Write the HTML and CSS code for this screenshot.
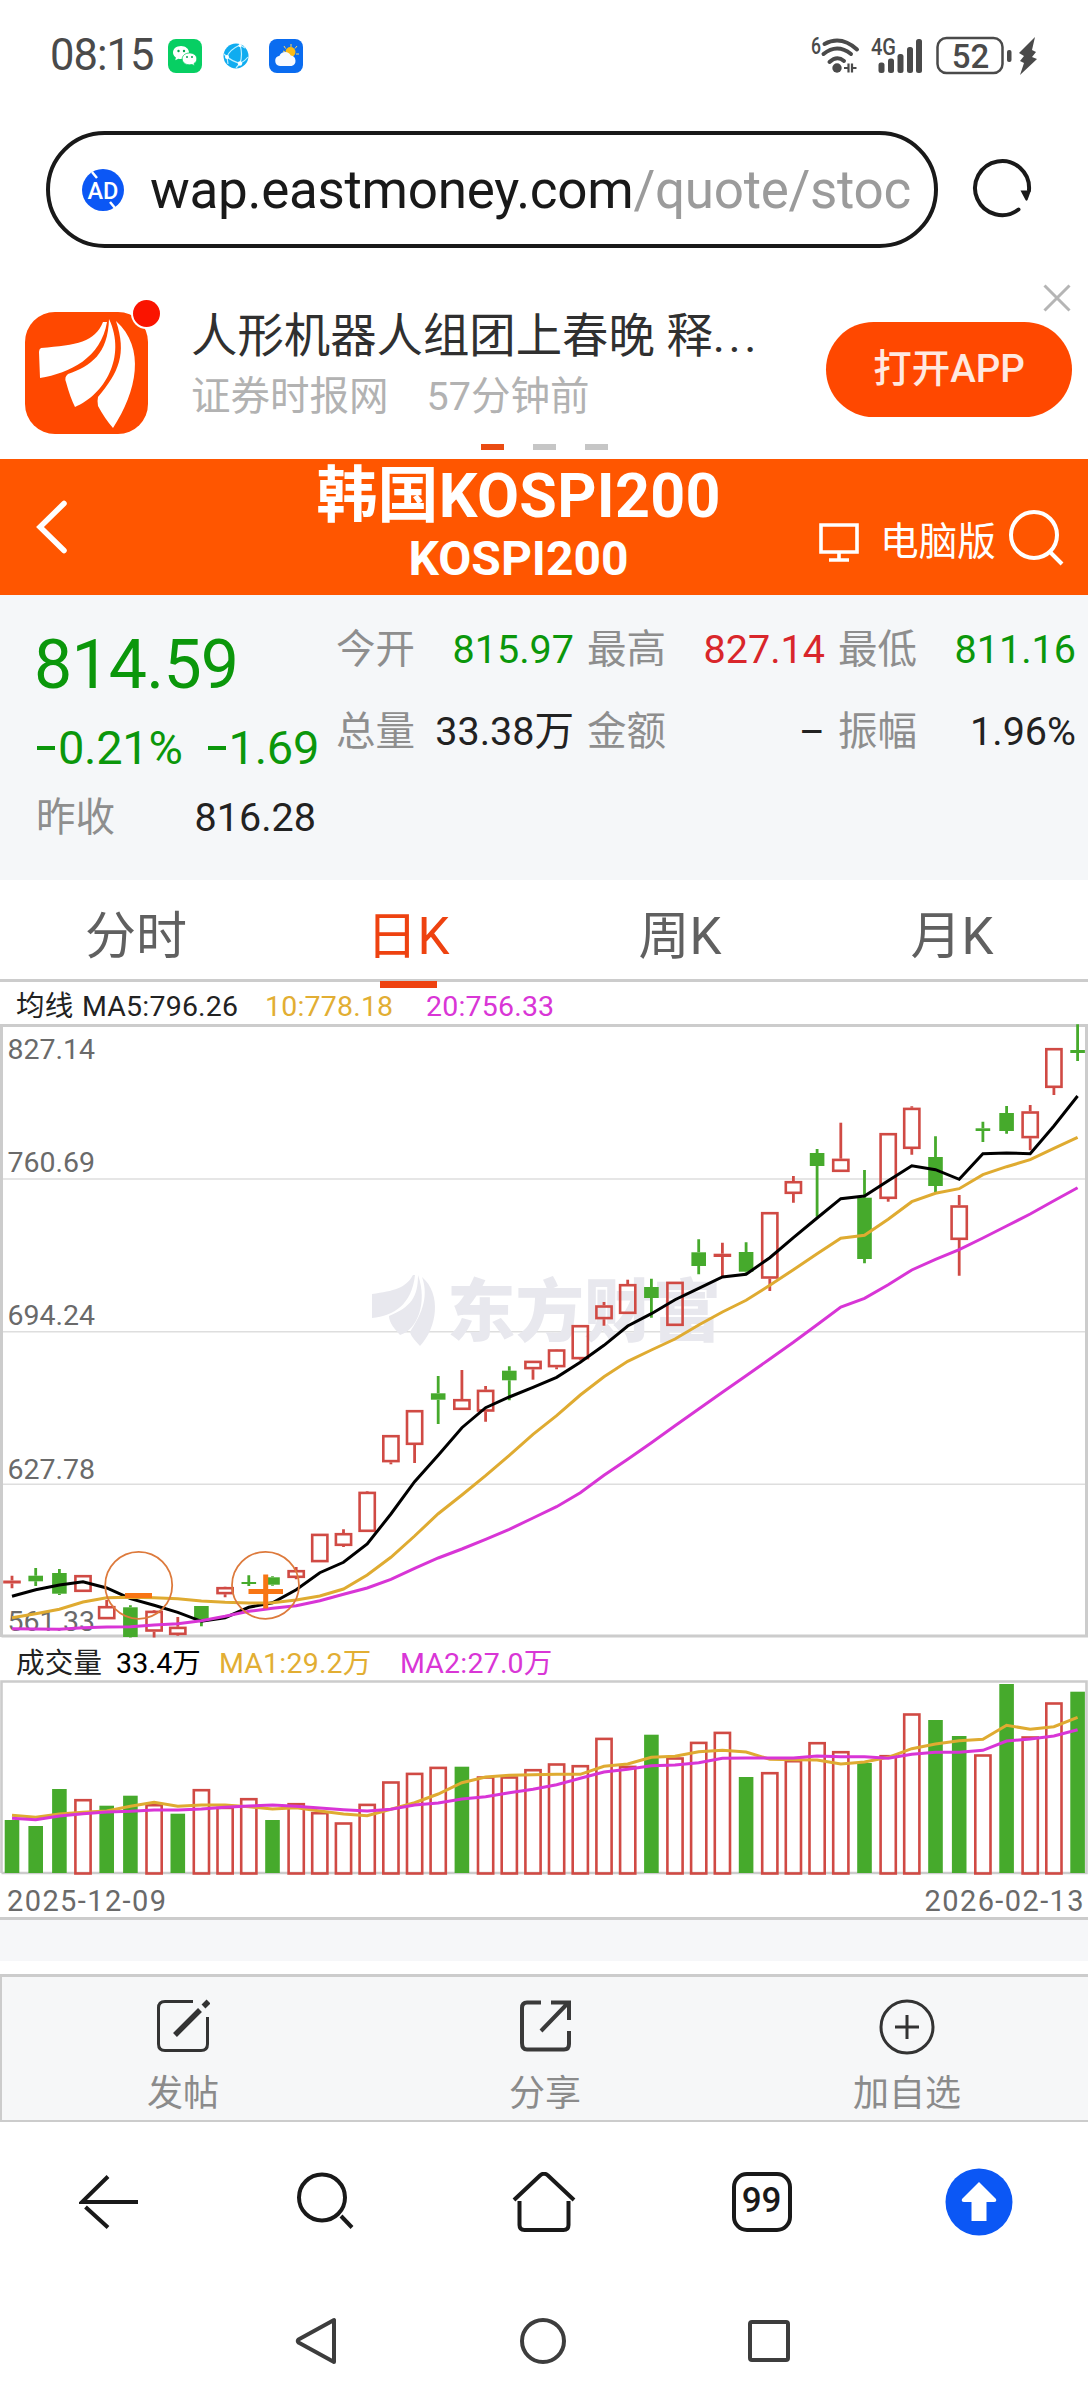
FILE: index.html
```html
<!DOCTYPE html>
<html lang="zh-CN">
<head>
  <meta charset="UTF-8">
  <title>韩国KOSPI200</title>
  <link rel="stylesheet" href="styles.css">
</head>
<body>

  <div class="status-bar">
    <span class="clock">08:15</span>
    <svg class="app-icon" width="34" height="34" viewBox="0 0 34 34">
      <rect width="34" height="34" rx="8" fill="#07cf63"/>
      <path d="M13 7c-4.600 0-8 2.800-8 6.500 0 2 1.100 3.800 2.900 5l-.6 2.700 3-1.500c.9.200 1.800.3 2.700.3 4.500 0 8-2.900 8-6.500S17.500 7 13 7z" fill="#fff"/>
      <path d="M21.500 14c-4.200 0-7.300 2.600-7.300 5.900s3.100 5.900 7.300 5.900c.9 0 1.700-.1 2.500-.3l2.500 1.300-.5-2.300c1.800-1.100 2.800-2.700 2.800-4.600 0-3.300-3.100-5.900-7.300-5.900z" fill="#fff" stroke="#07cf63" stroke-width=".8"/>
      <g fill="#07a550"><circle cx="10.500" cy="12" r="1.200"/><circle cx="16" cy="12" r="1.200"/><circle cx="19" cy="18" r="1"/><circle cx="24" cy="18" r="1"/></g>
    </svg>
    <svg class="globe-icon" width="26" height="26" viewBox="0 0 26 26">
      <circle cx="13" cy="13" r="12.500" fill="#0facf0"/>
      <path d="M17 2Q6 7 4 14Q9 18 17 20.500Q20 11 17 2M4 14L1 11M17 20.500L13 25M17 20.500Q22 18 25 14M17 2L22 5M4 14L5 21" fill="none" stroke="#bff0ff" stroke-width="1.200"/>
      <g fill="#fff"><circle cx="4" cy="14" r="2"/><circle cx="17" cy="20.500" r="2.200"/><circle cx="17" cy="2.500" r="1.500"/></g>
    </svg>
    <svg class="app-icon" width="34" height="34" viewBox="0 0 34 34">
      <rect width="34" height="34" rx="8" fill="#0a6cf0"/>
      <path d="M22 5v3M15 7l1.500 2.500M28 7l-2 2.500M30 15h-3M14 12l2 1" stroke="#ffd75a" stroke-width="1"/>
      <circle cx="21.500" cy="13" r="5" fill="#fdbb14"/>
      <path d="M11 27a5.200 5.200 0 0 1-.5-10.300A6.200 6.200 0 0 1 21.800 16.600 5.300 5.300 0 0 1 22.500 27z" fill="#f7faff"/>
    </svg>
    <svg class="signals" width="228" height="40" viewBox="0 0 228 40">
      <text x="1" y="18" class="net-label" textLength="10" lengthAdjust="spacingAndGlyphs">6</text>
      <g fill="none" stroke="#4a4a4a" stroke-width="4" stroke-linecap="round">
        <path d="M14.500 8Q31 -1 47 13.500"/>
        <path d="M13.500 18Q27 7 41 18"/>
        <path d="M19.500 26Q27 19 34 25"/>
      </g>
      <circle cx="27" cy="32" r="4.700" fill="#4a4a4a"/>
      <path d="M38.500 27.500v9M42 27.500v9M34 32h4.500M42 32h4.500" stroke="#4a4a4a" stroke-width="2.200"/>
      <text x="61" y="19" class="net-label" textLength="25" lengthAdjust="spacingAndGlyphs">4G</text>
      <g fill="#4a4a4a">
        <rect x="68.500" y="26.500" width="6" height="10.500" rx="2.500"/>
        <rect x="78" y="22.500" width="6" height="14.500" rx="2.500"/>
        <rect x="87.500" y="18" width="6" height="19" rx="2.500"/>
        <rect x="97" y="11" width="6" height="26" rx="2.500"/>
        <rect x="106" y="3" width="6" height="34" rx="2.500"/>
      </g>
      <rect x="127.500" y="2" width="65" height="35" rx="9" fill="none" stroke="#4a4a4a" stroke-width="2.500"/>
      <text x="160.500" y="31.500" class="battery-text" text-anchor="middle">52</text>
      <rect x="197" y="14" width="4.500" height="12" rx="2" fill="#4a4a4a"/>
      <path d="M225 1L209 17l5 3-4 5 4 2-4 12 17-16-5-2 4-5-4-2z" fill="#4a4a4a"/>
    </svg>
  </div>

  <div class="address-row">
    <div class="address-bar">
      <svg class="ad-icon" width="42" height="42" viewBox="0 0 42 42">
        <circle cx="21" cy="21" r="21" fill="#0b57f5"/>
        <path d="M10 3l5 6M28 33l5 6" stroke="#fff" stroke-width="2.500"/>
        <text x="21" y="29.500" text-anchor="middle">AD</text>
      </svg>
      <span class="url">wap.eastmoney.com<span class="url-path">/quote/stoc</span></span>
    </div>
    <svg class="reload" width="60" height="62" viewBox="0 0 60 62">
      <path d="M46.500 50.500A27 27 0 1 1 57 31" fill="none" stroke="#191919" stroke-width="4" stroke-linecap="round"/>
      <path d="M48.500 31.500h10.500l-3.500 9.500q-1 1.500-2 0z" fill="#191919"/>
    </svg>
  </div>

  <div class="promo">
    <svg class="promo-logo" width="138" height="138" viewBox="0 0 138 138">
      <rect x="0" y="14" width="123" height="122" rx="30" fill="#ff4800"/>
      <path d="M78 24C70 44 52 47 16 50q-2 1-2 4l1 26C45 75 76 60 82 24z" fill="#fff"/>
      <path d="M84 21C83 56 66 68 43 76q-4 3-2 8 4 15 9 25C79 97 102 59 84 21z" fill="#fff"/>
      <path d="M91 23C102 56 94 74 73 99q-1 4 0 9 7 13 15 22C112 93 121 50 91 23z" fill="#fff"/>
      <circle cx="121.500" cy="15.500" r="15.500" fill="#fff"/>
      <circle cx="121.500" cy="15.500" r="13.500" fill="#fa1400"/>
    </svg>
    <div class="promo-text">
      <div class="promo-title">人形机器人组团上春晚 释<span class="ellipsis">...</span></div>
      <div class="promo-meta"><span>证券时报网</span><span>57分钟前</span></div>
    </div>
    <div class="open-app">打开APP</div>
    <svg class="close" width="28" height="28" viewBox="0 0 28 28"><path d="M1.500 1.500l25 25M26.500 1.500l-25 25" stroke="#b5b5b5" stroke-width="3"/></svg>
    <div class="pager"><i class="on"></i><i></i><i></i></div>
  </div>

  <div class="header">
    <svg class="back" width="32" height="54" viewBox="0 0 32 54"><path d="M28 3.500L4 27l24 23.500" fill="none" stroke="#fff" stroke-width="5.500" stroke-linecap="round"/></svg>
    <div class="header-title">
      <div class="name">韩国KOSPI200</div>
      <div class="code">KOSPI200</div>
    </div>
    <div class="header-tools">
      <svg width="40" height="40" viewBox="0 0 40 40"><path d="M2 3h36v27H2zM20 30v7M10 38h20" fill="none" stroke="#fff" stroke-width="3.600"/></svg>
      <span class="pc">电脑版</span>
      <svg class="find" width="56" height="58" viewBox="0 0 56 58"><circle cx="26" cy="26" r="23" fill="none" stroke="#fff" stroke-width="4"/><path d="M41 42l13 13" stroke="#fff" stroke-width="4"/></svg>
    </div>
  </div>

  <div class="quote">
    <div class="quote-main">
      <div class="price">814.59</div>
      <div class="change"><span class="pct"><i class="minus"></i>0.21%</span><span><i class="minus"></i>1.69</span></div>
      <div class="cell prev"><label>昨收</label><b>816.28</b></div>
    </div>
    <div class="quote-grid">
      <div class="cell"><label>今开</label><b class="green">815.97</b></div>
      <div class="cell"><label>最高</label><b class="red">827.14</b></div>
      <div class="cell"><label>最低</label><b class="green">811.16</b></div>
      <div class="cell"><label>总量</label><b>33.38万</b></div>
      <div class="cell"><label>金额</label><b>–</b></div>
      <div class="cell"><label>振幅</label><b>1.96%</b></div>
    </div>
  </div>

  <div class="tabs">
    <div class="tab">分时</div>
    <div class="tab active">日K</div>
    <div class="tab">周K</div>
    <div class="tab">月K</div>
  </div>

  <div class="legend">
    <span class="l-name">均线</span><span class="l-ma5">MA5:796.26</span><span class="l-ma10 yellow">10:778.18</span><span class="l-ma20 pink">20:756.33</span>
  </div>
  <svg class="kline" id="kline" width="1088" height="614" viewBox="0 0 1088 614"></svg>

  <div class="legend vol-legend">
    <span class="v-name">成交量</span><span class="v-now">33.4万</span><span class="v-ma1 yellow">MA1:29.2万</span><span class="v-ma2 pink">MA2:27.0万</span>
  </div>
  <svg class="volume" id="volume" width="1088" height="196" viewBox="0 0 1088 196"></svg>
  <div class="dates"><span>2025-12-09</span><span>2026-02-13</span></div>
  <div class="gap"></div>

  <div class="actions">
    <div class="action">
      <svg width="54" height="54" viewBox="0 0 54 54" fill="none" stroke="#333" stroke-width="3"><path d="M37 2.500H9Q2.500 2.500 2.500 9v36Q2.500 51.500 9 51.500h36Q51.500 51.500 51.500 45V18"/><path d="M19 36L44 11M47.500 7.500l5-5" stroke-width="5.500"/></svg>
      <span>发帖</span>
    </div>
    <div class="action">
      <svg width="54" height="54" viewBox="0 0 54 54" fill="none" stroke="#3a3a3a" stroke-width="4"><path d="M23 3.500H9Q4 3.500 4 9v35Q4 50.500 9 50.500h37Q51 50.500 51 45V32M33 3.500h18V21M50 4L23 32"/></svg>
      <span>分享</span>
    </div>
    <div class="action">
      <svg width="56" height="56" viewBox="0 0 56 56" fill="none" stroke="#333" stroke-width="3"><circle cx="28" cy="28" r="26"/><path d="M16 28h24M28 16v24"/></svg>
      <span>加自选</span>
    </div>
  </div>

  <div class="browser-nav">
    <div><svg width="60" height="60" viewBox="0 0 60 60" fill="none" stroke="#191919" stroke-width="4"><path d="M59 30H3L29 4.500M6.500 35L29 55.500"/></svg></div>
    <div><svg width="60" height="60" viewBox="0 0 60 60" fill="none" stroke="#191919" stroke-width="4"><circle cx="26" cy="25.500" r="23"/><path d="M45 44l11 11.500"/></svg></div>
    <div><svg width="64" height="60" viewBox="0 0 64 60" fill="none" stroke="#191919" stroke-width="4"><path d="M2 28L28 3.500q4-3.500 8 0L62 28M7.500 29v24q0 5 5 5h39q5 0 5-5V29"/></svg></div>
    <div><span class="tab-count">99</span></div>
    <div><svg width="68" height="68" viewBox="0 0 68 68"><circle cx="34" cy="34" r="33.500" fill="#0b57f5"/><path d="M34 14L17 31q-1 3 2 3h7.500v19h15V34H49q3 0 2-3z" fill="#fff"/></svg></div>
  </div>

  <div class="system-nav">
    <svg width="42" height="50" viewBox="0 0 42 50"><path d="M39 4v42L3.500 26.500q-1.500-1.500 0-3z" fill="none" stroke="#3d3d3d" stroke-width="4" stroke-linejoin="round"/></svg>
    <svg width="46" height="46" viewBox="0 0 46 46"><circle cx="23" cy="23" r="21" fill="none" stroke="#3d3d3d" stroke-width="4"/></svg>
    <svg width="44" height="44" viewBox="0 0 44 44"><rect x="3" y="3" width="38" height="38" rx="2" fill="none" stroke="#3d3d3d" stroke-width="4"/></svg>
  </div>

  <script src="script.js"></script>
</body>
</html>
```
FILE: styles.css
```css
body {
  margin: 0;
  width: 1088px;
  height: 2400px;
  overflow: hidden;
  background: #fff;
  color: #222;
  font-family: Roboto, "Noto Sans CJK SC", sans-serif;
}

div, span {
  white-space: nowrap;
}

svg {
  display: block;
  flex: none;
}

/* phone status bar */
.status-bar {
  display: flex;
  align-items: center;
  box-sizing: border-box;
  height: 131px;
  padding: 0 50px 19px 50px;
}

.clock {
  width: 118px;
  font-size: 43.5px;
  letter-spacing: -1px;
  line-height: 60px;
  color: #4a4a4a;
}

.globe-icon {
  margin: 0 20px 0 21px;
}

.signals {
  margin-left: auto;
  overflow: visible;
}

.net-label {
  font-size: 23px;
  font-weight: 500;
  fill: #4a4a4a;
}

.battery-text {
  font-size: 33px;
  font-weight: 500;
  fill: #4a4a4a;
}

/* address bar */
.address-row {
  display: flex;
  align-items: center;
  height: 117px;
  padding-left: 46px;
}

.address-bar {
  display: flex;
  align-items: center;
  box-sizing: border-box;
  width: 892px;
  height: 117px;
  padding-left: 32px;
  border: 4px solid #191919;
  border-radius: 59px;
}

.ad-icon text {
  font-size: 23.5px;
  font-weight: 500;
  fill: #fff;
}

.url {
  margin-left: 26px;
  font-size: 53px;
  line-height: 80px;
  letter-spacing: -0.3px;
  color: #191919;
}

.url-path {
  color: #9b9b9b;
}

.reload {
  margin-left: 34px;
}

/* app promotion */
.promo {
  position: relative;
  display: flex;
  height: 211px;
}

.promo-logo {
  margin: 50px 0 0 25px;
}

.promo-text {
  flex: 1;
  padding: 56px 0 0 28px;
}

.promo-title {
  font-size: 46.4px;
  line-height: 64px;
  color: #303030;
}

.ellipsis {
  letter-spacing: 3.5px;
}

.promo-meta {
  display: flex;
  gap: 38px;
  font-size: 39.5px;
  line-height: 58px;
  color: #b2b2b2;
}

.open-app {
  width: 246px;
  height: 95px;
  margin: 74px 16px 0 0;
  border-radius: 48px;
  background: #ff4800;
  color: #ffe9e0;
  font-size: 38.5px;
  font-weight: 500;
  line-height: 93px;
  text-align: center;
}

.close {
  position: absolute;
  top: 36px;
  right: 17px;
}

.pager {
  position: absolute;
  left: 481px;
  bottom: 9px;
  display: flex;
  gap: 29px;
}

.pager i {
  width: 23px;
  height: 6px;
  background: #c6c6c6;
}

.pager .on {
  background: #ea4c12;
}

/* orange header */
.header {
  display: flex;
  align-items: center;
  height: 136px;
  background: #ff5600;
  color: #fff;
}

.back {
  margin-left: 36px;
}

.header-title {
  width: 451px;
  margin: -6px 0 0 225px;
  text-align: center;
  font-weight: 700;
}

.name {
  font-size: 61px;
  line-height: 70px;
  letter-spacing: 0.3px;
}

.code {
  font-size: 48px;
  line-height: 56px;
}

.header-tools {
  display: flex;
  align-items: center;
  margin: 30px 0 0 75px;
}

.pc {
  margin: 0 12px 0 21px;
  font-size: 38.7px;
  line-height: 50px;
}

.find {
  margin-top: -8px;
}

/* quote summary */
.quote {
  display: flex;
  height: 285px;
  background: #f5f7f9;
}

.quote-main {
  width: 280px;
  padding: 24px 0 0 36px;
  color: #0b970b;
}

.price {
  margin-left: -2px;
  font-size: 68px;
  line-height: 92px;
  letter-spacing: -0.8px;
}

.change {
  display: flex;
  gap: 24px;
  font-size: 47px;
  line-height: 74px;
  letter-spacing: -0.3px;
}

.minus {
  display: inline-block;
  width: 18px;
  height: 4px;
  margin: 0 3px 14px 1px;
  vertical-align: baseline;
  background: currentColor;
}

.cell {
  display: flex;
  justify-content: space-between;
  font-size: 39.5px;
  line-height: 82px;
  color: #8e8e8e;
}

.prev {
  line-height: 66px;
}

.cell b {
  font-weight: 400;
  color: #222;
}

.cell .green {
  color: #0b970b;
}

.cell .red {
  color: #d9262b;
}

.quote-grid {
  display: grid;
  grid-template-columns: 238px 238px 238px;
  column-gap: 13px;
  align-content: start;
  padding: 14px 0 0 20px;
}

/* period tabs */
.tabs {
  display: grid;
  grid-template-columns: repeat(4, 1fr);
  height: 99px;
  border-bottom: 3px solid #ccc;
}

.tab {
  position: relative;
  height: 99px;
  font-size: 51px;
  line-height: 113px;
  text-align: center;
  color: #606060;
}

.active {
  color: #ee4210;
}

.active::after {
  content: "";
  position: absolute;
  left: 108px;
  bottom: -9px;
  width: 57px;
  height: 7px;
  background: #ee4210;
}

/* charts */
.legend {
  display: flex;
  height: 42px;
  padding-left: 16px;
  font-size: 28.5px;
  line-height: 49px;
  letter-spacing: 0.2px;
}

.vol-legend {
  line-height: 51px;
}

.l-name {
  width: 66px;
}

.l-ma5 {
  width: 183px;
}

.l-ma10 {
  width: 161px;
}

.yellow {
  color: #e2ae33;
}

.pink {
  color: #d936d6;
}

.v-name {
  width: 100px;
}

.v-now {
  width: 103px;
  color: #000;
}

.v-ma1 {
  width: 181px;
}

.axis {
  font-size: 28.5px;
  fill: #6a6a6a;
}

.watermark {
  font-size: 68.5px;
  font-weight: 900;
  fill: #e8e8ee;
}

.dates {
  display: flex;
  justify-content: space-between;
  height: 41px;
  padding: 0 3px 0 7px;
  border-bottom: 3px solid #ccc;
  font-size: 29px;
  line-height: 50px;
  letter-spacing: 1.4px;
  color: #6a6a6a;
}

.gap {
  height: 41px;
  margin-bottom: 13px;
  background: #f6f7f9;
}

/* bottom bars */
.actions {
  display: grid;
  grid-template-columns: repeat(3, 1fr);
  box-sizing: border-box;
  height: 148px;
  border: 2px solid #ccc;
  border-top-width: 3px;
  border-right: 0;
  background: #f6f7f8;
}

.action {
  display: flex;
  flex-direction: column;
  align-items: center;
  padding-top: 22px;
  font-size: 36px;
  line-height: 50px;
  color: #8b8b8b;
}

.action span {
  margin-top: auto;
  margin-bottom: 1px;
}

.browser-nav {
  display: grid;
  grid-template-columns: repeat(5, 1fr);
  align-items: center;
  height: 160px;
}

.browser-nav div {
  display: flex;
  justify-content: center;
}

.tab-count {
  box-sizing: border-box;
  width: 60px;
  height: 60px;
  border: 4px solid #191919;
  border-radius: 15px;
  color: #191919;
  font-size: 35px;
  font-weight: 500;
  line-height: 50px;
  text-align: center;
}

.system-nav {
  display: flex;
  align-items: center;
  height: 118px;
  padding-left: 295px;
}

.system-nav svg + svg {
  margin-left: 183px;
}

.system-nav svg:last-child {
  margin-left: 181px;
}
```
FILE: script.js
```js
const STEP = 23.68;
const X0 = 12;
const RED = "#d04a44";
const GREEN = "#46aa2c";

// [color, high, body top, body bottom, low]
const candles = [
  ["r", 551.7, 556.5, 559.5, 564.3], ["g", 544, 551.7, 557.3, 562], ["g", 545, 549, 569.7, 571],
  ["r", 551, 551, 568, 568], ["r", 576, 582, 595.3, 595.3], ["g", 581.3, 583.3, 613, 613.6],
  ["r", 586, 586.7, 607.7, 613.6], ["r", 593, 602.7, 611, 611.7], ["g", 582, 582, 596.3, 602.3],
  ["r", 562.7, 563, 570.3, 573.3], ["g", 551.3, 558, 560, 562], ["g", 552.3, 553.3, 560.7, 561.7],
  ["r", 543, 546, 554, 555.3], ["r", 509.7, 509.7, 538.3, 538.3], ["r", 505.3, 509, 522, 523],
  ["r", 467, 467.7, 508, 508], ["r", 411, 411, 438.3, 440.3], ["r", 386, 386, 421, 439],
  ["g", 352, 369.3, 375.7, 400], ["r", 346, 375, 386, 386], ["r", 362, 365.7, 387.7, 397.7],
  ["g", 342.3, 346.7, 356.3, 376.3], ["r", 336.7, 336.7, 345.3, 355.7], ["r", 325, 325.3, 343.3, 345.3],
  ["r", 301, 301, 335.3, 336.3], ["r", 278, 281.3, 295.3, 301.7], ["r", 255.7, 260, 290, 290],
  ["g", 254.7, 263, 274, 293.7], ["r", 257.7, 257.7, 302, 302], ["g", 215.3, 228.3, 242, 250.3],
  ["r", 218.7, 229.7, 233, 253], ["g", 218.3, 228, 247.7, 248.7], ["r", 188, 188, 254.7, 267],
  ["r", 152, 157, 170, 178.7], ["g", 125, 129, 142, 192.7], ["r", 98.7, 134.7, 148, 148],
  ["g", 146, 173.7, 235, 239.3], ["r", 109, 109, 175, 177.7], ["r", 82.3, 83.7, 125, 130.7],
  ["g", 112.3, 133, 162, 168.3], ["r", 171, 181.3, 216, 251.7], ["g", 97.7, 104.3, 107, 118],
  ["g", 82, 89, 107, 109.7], ["r", 81, 87.3, 114.3, 126.3], ["r", 24, 24, 64, 71],
  ["g", 0.3, 26, 29, 37]
];

const ma5 = [572.3, 565.7, 561, 557.7, 564, 574.7, 581.3, 588.3, 597.3, 593.7, 583.3, 578.7, 565.7, 548.7, 538.3, 520,
  490, 457.7, 431.3, 403.7, 383.7, 373, 363.3, 353.3, 338.3, 321.3, 302, 289.7, 275.7, 264.3, 253, 250.3,
  233.7, 213.7, 194, 174.7, 172, 156.7, 141.7, 145.7, 155.3, 129.7, 129, 129.7, 102, 72];
const ma10 = [593.7, 589.7, 585.3, 578, 573.7, 573.3, 573.7, 574.7, 577, 578.3, 579, 578.7, 576, 572, 565, 551,
  533.3, 512, 489.7, 471, 451.7, 431.3, 410.3, 391.7, 371, 352.7, 337.3, 326, 315, 301, 288, 276.3,
  261.3, 245.7, 229.7, 214.3, 211.3, 195.3, 177.7, 169.3, 164.7, 150.7, 142.7, 135.7, 124.3, 113.3];
const ma20 = [604.7, 605, 605.3, 603.7, 603, 602.7, 601, 599.7, 596.7, 592.3, 587.3, 584.3, 581.7, 576.7, 570.3, 564,
  555.3, 544.3, 534, 525, 515.3, 505.3, 494, 482.7, 468.7, 451.3, 435.3, 418.7, 401.7, 385, 368.3, 351.7,
  335, 318.3, 300.7, 283, 274.3, 260.7, 246, 235.3, 225.7, 214, 202, 190, 176.7, 163.7];

const volColors = "gggrggrgrrrgrrrrrrrgrrrrrrrgrrrgrrrrgrrggrgrrg";
const volTops = [140, 146, 109, 119, 125.7, 115.7, 124, 133.7, 109, 126.7, 118, 140, 123, 132, 142.3, 123.7,
  101.3, 92.7, 86.7, 86.7, 96.3, 96.3, 89, 83.3, 85, 57.7, 85.7, 54.7, 77.3, 61.7, 51.7, 97,
  92, 80, 62, 71, 83, 75, 33.3, 40, 56, 74.3, 4, 56.3, 22.3, 11.7];
const volMa1 = [135.3, 137.3, 134, 132.3, 131, 126.3, 122.3, 126.3, 125, 125, 126.7, 129, 127.7, 131, 134, 135.7,
  129.3, 122.7, 114, 102.7, 97, 95.3, 94.7, 94.3, 94.3, 86.3, 84, 77.3, 76.3, 71.7, 70.3, 72,
  79.3, 79.7, 80, 84, 82, 77.3, 68.7, 64, 60.7, 59.3, 45.3, 49.3, 46.7, 37.3];
const volMa2 = [138.3, 139.7, 136, 133.7, 132, 131.3, 130, 130, 129, 127.3, 126, 125, 126.3, 128, 129.7, 131,
  129.3, 125, 123, 119, 116.7, 112.7, 109.3, 104.7, 98.3, 92, 89.3, 85.7, 85, 82.7, 78.3, 78,
  78, 78, 76, 76.7, 76.7, 78.3, 74.3, 72.3, 72.3, 70.3, 61, 59, 56, 49.7];

function xAt(i) {
  return +(X0 + STEP * i).toFixed(1);
}

function line(data, color) {
  const points = data.map((y, i) => xAt(i) + "," + y).join(" ");
  return `<polyline points="${points}" fill="none" stroke="${color}" stroke-width="3"/>`;
}

function box(color, x, top, bottom) {
  if (color === "g") {
    return `<rect x="${x - 7.3}" y="${top}" width="14.6" height="${bottom - top}" fill="${GREEN}"/>`;
  }
  if (bottom - top < 5) {
    return `<rect x="${x - 8.8}" y="${top}" width="17.6" height="${bottom - top}" fill="${RED}"/>`;
  }
  return `<rect x="${x - 7.6}" y="${top + 1.2}" width="15.2" height="${bottom - top - 2.4}" fill="none" stroke="${RED}" stroke-width="2.6"/>`;
}

function drawKline() {
  let out = "";
  [155, 307.7, 460.3].forEach(y => {
    out += `<path d="M2 ${y}H1086" stroke="#dedede" stroke-width="1.4"/>`;
  });

  // watermark
  out += `<g fill="#e8e8ee">
    <path d="M413 251C406 264 394 267 372 270v24c22-2 40-14 43-43z"/>
    <path d="M418 251c0 22-7 32-29 41 0 7 6 13 11 19 17-5 28-32 18-60z"/>
    <path d="M422 253c8 22-3 41-12 55 1 5 6 9 10 14 17-18 22-52 2-69z"/>
  </g>
  <text class="watermark" x="447" y="312">东方财富</text>`;

  out += `<path d="M1.5 613V1.5H1086.500V612H1.500" fill="none" stroke="#ccc" stroke-width="3"/>`;

  candles.forEach(([color, high, top, bottom, low], i) => {
    const x = xAt(i);
    const stroke = color === "g" ? GREEN : RED;
    out += `<path d="M${x} ${high}V${top}M${x} ${bottom}V${low}" stroke="${stroke}" stroke-width="2.8"/>`;
    out += box(color, x, top, bottom);
  });

  [["827.14", 35], ["760.69", 148], ["694.24", 301], ["627.78", 454.7], ["561.33", 607]].forEach(([t, y]) => {
    out += `<text class="axis" x="7.5" y="${y}">${t}</text>`;
  });

  out += line(ma5, "#000") + line(ma10, "#dfab31") + line(ma20, "#d835d6");

  // bonus markers
  out += `<g fill="none" stroke="#dd7a3c" stroke-width="1.8">
    <circle cx="138.7" cy="561.3" r="33.5"/><circle cx="265.5" cy="561.3" r="33.5"/></g>
    <path d="M125 571.5h27M248.5 567.5h34.5M265.7 550.5v34" stroke="#f87514" stroke-width="5"/>`;

  document.getElementById("kline").innerHTML = out;
}

function drawVolume() {
  let out = `<path d="M1.5 193V1.5H1086.5V193H1.5" fill="none" stroke="#ccc" stroke-width="2.6"/>`;
  volTops.forEach((top, i) => {
    out += box(volColors[i], xAt(i), top, volColors[i] === "g" ? 193 : 194.7);
  });
  out += line(volMa1, "#dfab31") + line(volMa2, "#d835d6");
  document.getElementById("volume").innerHTML = out;
}

drawKline();
drawVolume();
```
